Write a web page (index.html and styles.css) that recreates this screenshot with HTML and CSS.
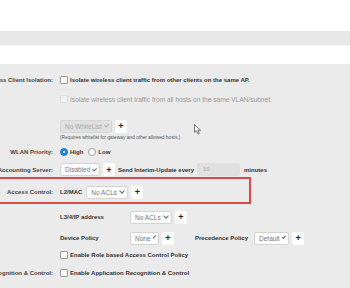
FILE: index.html
```html
<html>
<head>
    <title>SSID settings</title>
    <link rel="stylesheet" href="styles.css">
</head>
<body>
<div class="top"></div>
<div class="band"></div>
<div class="gap"></div>
<div class="panel">
  <div class="form">
    <div class="row r-iso">
      <div class="label">Wireless Client Isolation:</div>
      <div class="value">
        <span class="check"></span>
        <span class="strong">Isolate wireless client traffic from other clients on the same AP.</span>
      </div>
    </div>
    <div class="row r-iso2">
      <div class="label"></div>
      <div class="value">
        <span class="check disabled"></span>
        <span class="muted">Isolate wireless client traffic from all hosts on the same VLAN/subnet.</span>
      </div>
    </div>
    <div class="row r-white">
      <div class="label"></div>
      <div class="value">
        <span class="select disabled w-white">No WhiteList<i class="caret"></i></span>
        <span class="plus">+</span>
      </div>
    </div>
    <div class="row r-note">
      <div class="label"></div>
      <div class="value note">(Requires whitelist for gateway and other allowed hosts.)</div>
    </div>
    <div class="row r-prio">
      <div class="label">WLAN Priority:</div>
      <div class="value">
        <span class="radio on"></span><span class="strong">High</span>
        <span class="radio spaced"></span><span class="strong">Low</span>
      </div>
    </div>
    <div class="row r-acct">
      <div class="label">Accounting Server:</div>
      <div class="value">
        <span class="select w-disabled">Disabled<i class="caret"></i></span>
        <span class="plus">+</span>
        <span class="strong send">Send Interim-Update every</span>
        <span class="input">10</span>
        <span class="strong">minutes</span>
      </div>
    </div>
    <div class="row r-access">
      <div class="label">Access Control:</div>
      <div class="value">
        <span class="strong l2">L2/MAC</span>
        <span class="select w-acl">No ACLs<i class="caret"></i></span>
        <span class="plus">+</span>
      </div>
    </div>
    <div class="row r-l3">
      <div class="label"></div>
      <div class="value">
        <span class="strong sub">L3/4/IP address</span>
        <span class="select w-acl">No ACLs<i class="caret"></i></span>
        <span class="plus">+</span>
      </div>
    </div>
    <div class="row r-dev">
      <div class="label"></div>
      <div class="value">
        <span class="strong sub">Device Policy</span>
        <span class="select w-none">None<i class="caret"></i></span>
        <span class="plus">+</span>
        <span class="strong prec">Precedence Policy</span>
        <span class="select w-default">Default<i class="caret"></i></span>
        <span class="plus">+</span>
      </div>
    </div>
    <div class="row r-role">
      <div class="label"></div>
      <div class="value">
        <span class="check"></span>
        <span class="strong">Enable Role based Access Control Policy</span>
      </div>
    </div>
    <div class="row r-app">
      <div class="label">Application Recognition &amp; Control:</div>
      <div class="value">
        <span class="check"></span>
        <span class="strong">Enable Application Recognition &amp; Control</span>
      </div>
    </div>
  </div>
</div>
<svg class="cursor" width="8" height="11" viewBox="0 0 8 11">
  <path d="M0.5 0.5 L0.5 8.5 L2.5 6.8 L4 10 L5.3 9.4 L3.9 6.3 L6.6 6.3 Z" fill="#fff" stroke="#555" stroke-width="0.8"/>
</svg>
</body>
</html>
```

FILE: styles.css
```css
body {
    margin: 0;
    background: #fff;
    font-family: "Liberation Sans", Arial, sans-serif;
    font-size: 6px;
    color: #333;
    overflow: hidden;
}

.top {
    height: 31px;
}

.band {
    height: 14px;
    background: #e8e8e8;
}

.gap {
    height: 19px;
}

.panel {
    background: #ebebeb;
    height: 224px;
    padding-top: 8px;
    box-sizing: border-box;
}

.form {
    margin-left: -97px;
}

.row {
    display: flex;
    align-items: center;
}

.label {
    width: 150px;
    flex: none;
    text-align: right;
    font-weight: bold;
    color: #444;
    padding-right: 7px;
    white-space: nowrap;
}

.value {
    display: flex;
    align-items: center;
    white-space: nowrap;
}

.strong {
    font-weight: bold;
    color: #333;
}

.muted {
    color: #999;
    font-size: 6.6px;
}

.note {
    font-size: 4.8px;
    color: #555;
}

.check {
    width: 6px;
    height: 6px;
    border: 1px solid #999;
    border-radius: 1px;
    background: #fff;
    margin-right: 2px;
}

.check.disabled {
    border-color: #ddd;
    background: #f2f2f2;
}

.radio {
    width: 6px;
    height: 6px;
    border: 1px solid #999;
    border-radius: 50%;
    background: #fff;
    margin-right: 2px;
    box-sizing: content-box;
}

.radio.on {
    border-color: #1a7ae8;
    background: radial-gradient(circle, #fff 0 1.2px, #1a7ae8 1.6px);
}

.radio.spaced {
    margin-left: 5px;
}

.select {
    display: flex;
    align-items: center;
    justify-content: space-between;
    height: 13px;
    box-sizing: border-box;
    padding: 0 3px 0 4px;
    background: #fff;
    border: 1px solid #d4d4d4;
    border-radius: 2px;
    color: #777;
    font-size: 6.5px;
}

.select.disabled {
    background: #e0e0e0;
    border-color: #d6d6d6;
    color: #aaa;
}

.caret {
    width: 3px;
    height: 3px;
    border-right: 1px solid #666;
    border-bottom: 1px solid #666;
    transform: rotate(45deg);
    margin: -2px 0 0 3px;
}

.select.disabled .caret {
    border-color: #aaa;
}

.plus {
    width: 12px;
    height: 13px;
    margin-left: 3px;
    background: #fff;
    border-radius: 2px;
    display: flex;
    align-items: center;
    justify-content: center;
    font-weight: bold;
    font-size: 9px;
    color: #222;
}

.w-white { width: 52px; }
.w-disabled { width: 40px; }
.w-acl { width: 42px; }
.w-none { width: 29px; }
.w-default { width: 35px; }

.send {
    margin-left: 3px;
}

.input {
    width: 43px;
    height: 13px;
    box-sizing: border-box;
    margin: 0 4px 0 3px;
    padding-left: 6px;
    background: #e0e0e0;
    border-radius: 2px;
    color: #aaa;
    line-height: 13px;
}

.r-iso { height: 16px; }
.r-iso2 { height: 18px; margin-top: 2px; }
.r-white { height: 14px; margin-top: 11px; }
.r-note { height: 8px; }
.r-prio { height: 14px; margin-top: 4px; }
.r-acct { height: 13px; margin-top: 4px; }

.r-access {
    height: 27px;
    box-sizing: border-box;
    margin-top: 1px;
    padding-top: 3px;
    width: 348px;
    border: 2px solid #e0474c;
    border-left: none;
}

.l2 { margin-right: 4px; }

.r-l3 { height: 14px; margin-top: 6px; }
.r-dev { height: 14px; margin-top: 7px; }
.r-role { height: 10px; margin-top: 5px; }
.r-app { height: 10px; margin-top: 8px; }

.sub { width: 70px; }

.prec { margin-left: 21px; margin-right: 6px; }

.cursor {
    position: absolute;
    left: 194px;
    top: 124px;
}
```
